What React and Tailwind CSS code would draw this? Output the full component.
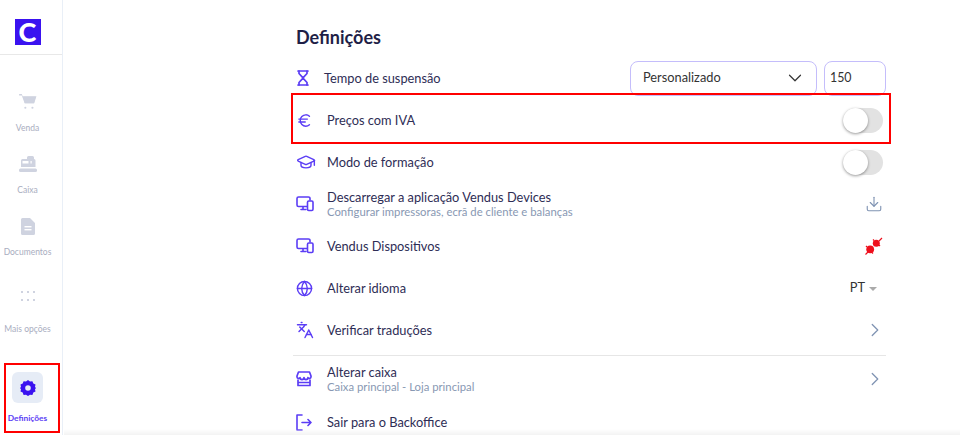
import { ChevronDown, ChevronRight, Download, Euro, Globe, GraduationCap, Languages } from 'lucide-react';

const Devices = () => (
  <svg width="18" height="16" viewBox="0 0 18 16" fill="none" stroke="#5b3df5" strokeWidth="1.6" strokeLinejoin="round" strokeLinecap="round">
    <path d="M11 10.500H2.500a1.500 1.500 0 0 1-1.500-1.500V2.500A1.500 1.500 0 0 1 2.500 1h10A1.500 1.500 0 0 1 14 2.500V4" />
    <path d="M5 13.500h5M7 11v2.500" />
    <rect x="11.500" y="5" width="5.500" height="9.500" rx="1.200" fill="#fff" />
  </svg>
);

const Hourglass = () => (
  <svg width="12" height="16" viewBox="0 0 12 16" fill="none" stroke="#5b3df5" strokeWidth="1.7" strokeLinejoin="round" strokeLinecap="round">
    <path d="M1 1h10M1 15h10" />
    <path d="M2 1v2.500L6 7.800l4-4.300V1M2 15v-2.500L6 8.200l4 4.300V15" />
  </svg>
);

const Shop = () => (
  <svg width="16" height="16" viewBox="0 0 16 16" fill="none" stroke="#5b3df5" strokeWidth="1.700" strokeLinejoin="round">
    <path d="M2.500 1h11L15 5v1a1.600 1.600 0 0 1-3 .6 2 2 0 0 1-4 0 2 2 0 0 1-4 0A1.600 1.600 0 0 1 1 6V5z" />
    <path d="M2 8.500v6h12v-6M2 11.500h12" />
  </svg>
);

const Exit = () => (
  <svg width="16" height="17" viewBox="0 0 16 17" fill="none" stroke="#5b3df5" strokeWidth="1.600" strokeLinejoin="round" strokeLinecap="round">
    <path d="M6 1H1v15h5" />
    <path d="M6 8.500h9M12 5.500l3 3-3 3" />
  </svg>
);

const Cart = () => (
  <svg width="18" height="16" viewBox="0 0 20 18" fill="#cfd3e0">
    <path d="M0 0h3l1 2.500h15.500L17 10.500H6.200L3 1.600H0z" />
    <path d="M4.600 3h14l-2 7.500H6.400z" />
    <circle cx="7" cy="15.500" r="1.200" />
    <circle cx="15" cy="15.500" r="1.200" />
  </svg>
);

const Register = () => (
  <svg width="18" height="16" viewBox="0 0 18 16" fill="#cfd3e0">
    <path d="M2 4.500A1.500 1.500 0 0 1 3.500 3H8V1.500A1.500 1.500 0 0 1 9.500 0h4A1.500 1.500 0 0 1 15 1.500V3a1.500 1.500 0 0 1 1.500 1.500V11H2z" />
    <rect x="3.500" y="5" width="6" height="2.500" fill="#fff" />
    <rect x="11.500" y="5" width="1.200" height="2.500" fill="#fff" />
    <rect x="0" y="12.500" width="18" height="3.500" rx="1.500" />
  </svg>
);

const Doc = () => (
  <svg width="14" height="17" viewBox="0 0 14 17" fill="#cfd3e0">
    <path d="M1.500 0H9l5 5v10.500a1.500 1.500 0 0 1-1.500 1.500h-11A1.500 1.500 0 0 1 0 15.500v-14A1.500 1.500 0 0 1 1.500 0z" />
    <rect x="3.500" y="8" width="7" height="1.400" fill="#fff" />
    <rect x="3.500" y="11" width="7" height="1.400" fill="#fff" />
  </svg>
);

const Dots = () => (
  <div className="grid grid-cols-3 gap-x-[4px] gap-y-[6px]">
    {[0, 1, 2, 3, 4, 5].map((i) => (
      <span key={i} className="w-[2px] h-[2px] bg-[#cfd3e0]" />
    ))}
  </div>
);

const Cog = () => (
  <svg width="16" height="16" viewBox="0 0 16 16">
    <path fill="#3a12f0" fillRule="evenodd" d="M8 0l2 1.400 2.400-.2.900 2.300 2.200 1-.5 2.400L16 8l-1 1.200.5 2.400-2.200 1-.9 2.300-2.400-.2L8 16l-2-1.300-2.400.2-.9-2.300-2.200-1 .5-2.400L0 8l1-1.100-.5-2.400 2.200-1 .9-2.300 2.400.2zM8 5.200a2.800 2.800 0 1 0 0 5.600 2.800 2.800 0 0 0 0-5.600z" />
  </svg>
);

const Plug = () => (
  <svg width="18" height="18" viewBox="0 0 18 18" fill="#ee0f1c">
    <path d="M0.500 17.500l2.500-2.500M14 4l3-3" stroke="#ee0f1c" strokeWidth="1.200" />
    <circle cx="5.200" cy="12.300" r="3.900" />
    <circle cx="11.300" cy="6.300" r="3.500" />
    <path d="M2 10l-1-1M7 15.500l1 1M9 3.500L8 2.500M14 8l1 1" stroke="#ee0f1c" strokeWidth="1.200" />
  </svg>
);

const Toggle = () => (
  <div className="relative w-[40px] h-[25px] rounded-full bg-[#e2e2e2]">
    <div className="absolute left-0 top-0 w-[25px] h-[25px] rounded-full bg-white shadow-[0_1px_3px_rgba(0,0,0,0.4)]" />
  </div>
);

const SideItem = ({ icon, label, className }) => (
  <div className={`w-[55px] flex flex-col items-center ${className}`}>
    <div className="h-[20px] flex items-center justify-center">{icon}</div>
    <span className="mt-[10px] text-[8.5px] leading-[12px] text-[#a9adc0] whitespace-nowrap">{label}</span>
  </div>
);

const Row = ({ icon, title, sub, right, className = 'h-[42px]' }) => (
  <div className={`flex items-center ${className}`}>
    <div className="w-[34px] pl-[3px] flex items-center shrink-0">{icon}</div>
    <div className="flex-1 min-w-0">
      <div className="text-[12.8px] leading-[16px] text-[#2e2d55]">{title}</div>
      {sub && <div className="text-[11.3px] leading-[14px] text-[#8898b3]">{sub}</div>}
    </div>
    <div className="flex items-center justify-end pr-[3px]">{right}</div>
  </div>
);

export default function App() {
  const purple = '#5b3df5';

  return (
    <div className="relative flex h-[435px] w-[960px] overflow-hidden bg-white font-['Lato',sans-serif]">
      <aside className="w-[63px] h-full shrink-0 border-r border-[#e9eff7] flex flex-col">
        <div className="h-[55px] shrink-0 border-b border-[#e8e8e8] flex items-start justify-center pt-[19px] pr-[7px]">
          <div className="w-[26px] h-[26px] bg-[#3a12f0] flex items-center justify-center">
            <span className="text-white font-black text-[27px] leading-[26px]">C</span>
          </div>
        </div>
        <SideItem icon={<Cart />} label="Venda" className="mt-[37px]" />
        <SideItem icon={<Register />} label="Caixa" className="mt-[20px]" />
        <SideItem icon={<Doc />} label="Documentos" className="mt-[20px]" />
        <div className="w-[55px] flex flex-col items-center mt-[33px]">
          <Dots />
          <span className="mt-[22px] text-[8.5px] leading-[12px] text-[#a9adc0]">Mais opções</span>
        </div>
        <div className="w-[55px] flex flex-col items-center mt-[37px]">
          <div className="w-[31px] h-[31px] rounded-[6px] bg-[#e6ecf6] flex items-center justify-center">
            <Cog />
          </div>
          <span className="mt-[9px] text-[8.4px] leading-[12px] font-bold text-[#5b3df5]">Definições</span>
        </div>
      </aside>

      <main className="flex-1 pl-[230px]">
        <div className="w-[593px]">
          <h1 className="pt-[25px] pl-[3px] text-[18px] leading-[24px] font-bold text-[#1f1f47]">Definições</h1>

          <div className="mt-[8px] flex items-center h-[42px]">
            <div className="w-[31px] pl-[4px] shrink-0"><Hourglass /></div>
            <div className="flex-1 pt-[1px] text-[12.8px] text-[#2e2d55]">Tempo de suspensão</div>
            <div className="w-[187px] h-[35px] rounded-[8px] border border-[#c4bdfb] flex items-center justify-between pl-[12px] pr-[10px] text-[12.8px] text-[#333]">
              Personalizado
              <ChevronDown size={22} strokeWidth={1.3} color="#333" />
            </div>
            <div className="ml-[7px] w-[62px] h-[35px] rounded-[8px] border border-[#c4bdfb] flex items-center pl-[5px] text-[12.4px] text-[#333]">150</div>
          </div>

          <Row icon={<Euro size={17} color={purple} strokeWidth={2} />} title="Preços com IVA" right={<Toggle />} />
          <Row icon={<GraduationCap size={20} color={purple} strokeWidth={1.7} />} title="Modo de formação" right={<Toggle />} />
          <Row
            icon={<Devices />}
            title="Descarregar a aplicação Vendus Devices"
            sub="Configurar impressoras, ecrã de cliente e balanças"
            right={<Download size={18} color="#8094b3" strokeWidth={1.5} />}
          />
          <Row icon={<Devices />} title="Vendus Dispositivos" right={<Plug />} />
          <Row
            icon={<Globe size={17} color={purple} strokeWidth={2} />}
            title="Alterar idioma"
            right={
              <div className="flex items-center gap-[4px] pr-[6px] text-[12.8px] text-[#333]">
                PT
                <span className="w-0 h-0 mt-[1px] border-x-[4px] border-x-transparent border-t-[4px] border-t-[#aaa]" />
              </div>
            }
          />
          <Row
            icon={<Languages size={18} color={purple} strokeWidth={1.9} />}
            title="Verificar traduções"
            right={<ChevronRight size={22} color="#8094b3" strokeWidth={1.4} className="mr-[-3px]" />}
          />
          <div className="mt-[4px] h-px bg-[#e6e6e6]" />
          <Row
            className="h-[48px] pb-[2px]"
            icon={<Shop />}
            title="Alterar caixa"
            sub="Caixa principal - Loja principal"
            right={<ChevronRight size={22} color="#8094b3" strokeWidth={1.4} className="mr-[-3px]" />}
          />
          <Row icon={<Exit />} title="Sair para o Backoffice" className="h-[36px]" />
        </div>
      </main>

      <div className="absolute left-[291px] top-[93px] w-[600px] h-[51px] border-2 border-[#ff0000]" />
      <div className="absolute left-[4px] top-[363px] w-[56px] h-[70px] border-2 border-[#ff0000]" />
      <div className="absolute left-[64px] bottom-0 right-0 h-[6px] bg-gradient-to-b from-transparent to-[#f3f3f3]" />
    </div>
  );
}
